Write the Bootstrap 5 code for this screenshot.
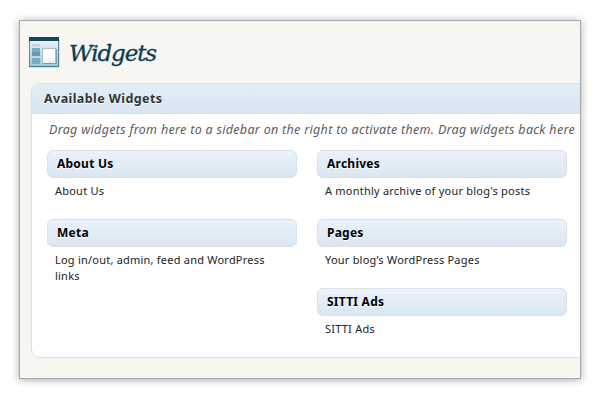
<!DOCTYPE html>
<html lang="en">
<head>
<meta charset="utf-8">
<title>Widgets</title>
<link rel="stylesheet" href="https://cdn.jsdelivr.net/npm/bootstrap@5.3.0/dist/css/bootstrap.min.css">
<style>
body{width:600px;height:400px;background:#fff;font-family:"Noto Sans","Open Sans",sans-serif;color:#333}
.screen{width:562px;height:359px;margin:20px 0 0 19px;background:#f7f6f1;border:1px solid #a9a9a9;box-shadow:0 1px 8px rgba(0,0,0,.33)}
.page-title{font:italic 23px/30px "DejaVu Serif",Georgia,serif;color:#093e56;letter-spacing:-1.1px;padding:2px 0 0 1px;-webkit-text-stroke:.35px #093e56}
.page-head{padding:15px 0 0 8px;height:62px}
.panel{width:560px;height:275px;margin-left:11px;border:1px solid #ddd;border-radius:9px;background:#fff}
.panel-head{height:30px;padding-left:12px;font-size:12.5px;letter-spacing:.42px;line-height:29px;background:linear-gradient(#e3edf6,#d8e6f2);border-bottom:1px solid #d9dfe4;border-radius:8px 0 0 0;text-shadow:0 1px 0 #fff}
.hint{font-size:12.5px;letter-spacing:.31px;line-height:18px;padding:7px 0 0 17px;height:36px;color:#5c5c5c}
.widget-grid{padding-left:15px;gap:20px}
.widget-col{width:250px}
.widget-item{height:69px}
.widget-name{height:28px;padding-left:9px;font-size:12px;letter-spacing:.24px;line-height:25px;color:#000;border:1px solid #dcdfe3;border-radius:6px;background:linear-gradient(#ebf2fb,#d9e7f2);text-shadow:0 1px 0 #fff}
.widget-info{font-size:11px;letter-spacing:.22px;line-height:16px;padding:5px 20px 0 8px;color:#222}
</style>
</head>
<body class="overflow-hidden">
<main class="screen overflow-hidden">
  <header class="page-head d-flex align-items-start">
    <svg width="32" height="33" viewBox="0 0 32 33" aria-hidden="true">
      <defs><linearGradient id="pane" x2="0" y2="1"><stop stop-color="#f1f7fa"/><stop offset="1" stop-color="#a9c5d3"/></linearGradient>
      <linearGradient id="sheet" x2="0" y2="1"><stop offset=".4" stop-color="#fff"/><stop offset="1" stop-color="#e6eff9"/></linearGradient></defs>
      <rect x="2" y="3" width="30" height="29" fill="#d9dcdb"/>
      <rect x="1.5" y="1.5" width="29" height="29" fill="url(#pane)" stroke="#4d8ba4"/>
      <path fill="#11465d" d="M1 1h30v4H1z"/>
      <path fill="#3d7f98" d="M1 30h30v1H1z"/>
      <path fill="#c1d7df" d="M4 8h8v2H4z"/><path fill="#78abc1" d="M4 12h8v8H4zM4 22h8v6H4z"/>
      <path fill="#639bb2" d="M4 16h8v4H4z"/>
      <path fill="#a9bfca" d="M14 12h14v16H14z"/><path fill="#7f9eae" d="M15 27h13V13h1v15H15z"/><path fill="url(#sheet)" d="M15 13h12v14H15z"/>
    </svg>
    <h1 class="page-title mb-0 ms-2">Widgets</h1>
  </header>
  <section class="panel">
    <h2 class="panel-head fw-bold mb-0">Available Widgets</h2>
    <p class="hint fst-italic text-nowrap mb-0">Drag widgets from here to a sidebar on the right to activate them. Drag widgets back here</p>
    <div class="widget-grid d-flex">
      <div class="widget-col flex-shrink-0">
        <article class="widget-item"><h3 class="widget-name fw-bold mb-0">About Us</h3><p class="widget-info mb-0">About Us</p></article>
        <article class="widget-item"><h3 class="widget-name fw-bold mb-0">Meta</h3><p class="widget-info mb-0">Log in/out, admin, feed and WordPress links</p></article>
      </div>
      <div class="widget-col flex-shrink-0">
        <article class="widget-item"><h3 class="widget-name fw-bold mb-0">Archives</h3><p class="widget-info mb-0">A monthly archive of your blog's posts</p></article>
        <article class="widget-item"><h3 class="widget-name fw-bold mb-0">Pages</h3><p class="widget-info mb-0">Your blog’s WordPress Pages</p></article>
        <article class="widget-item"><h3 class="widget-name fw-bold mb-0">SITTI Ads</h3><p class="widget-info mb-0">SITTI Ads</p></article>
      </div>
    </div>
  </section>
</main>
<script src="https://cdn.jsdelivr.net/npm/bootstrap@5.3.0/dist/js/bootstrap.bundle.min.js"></script>
</body>
</html>
